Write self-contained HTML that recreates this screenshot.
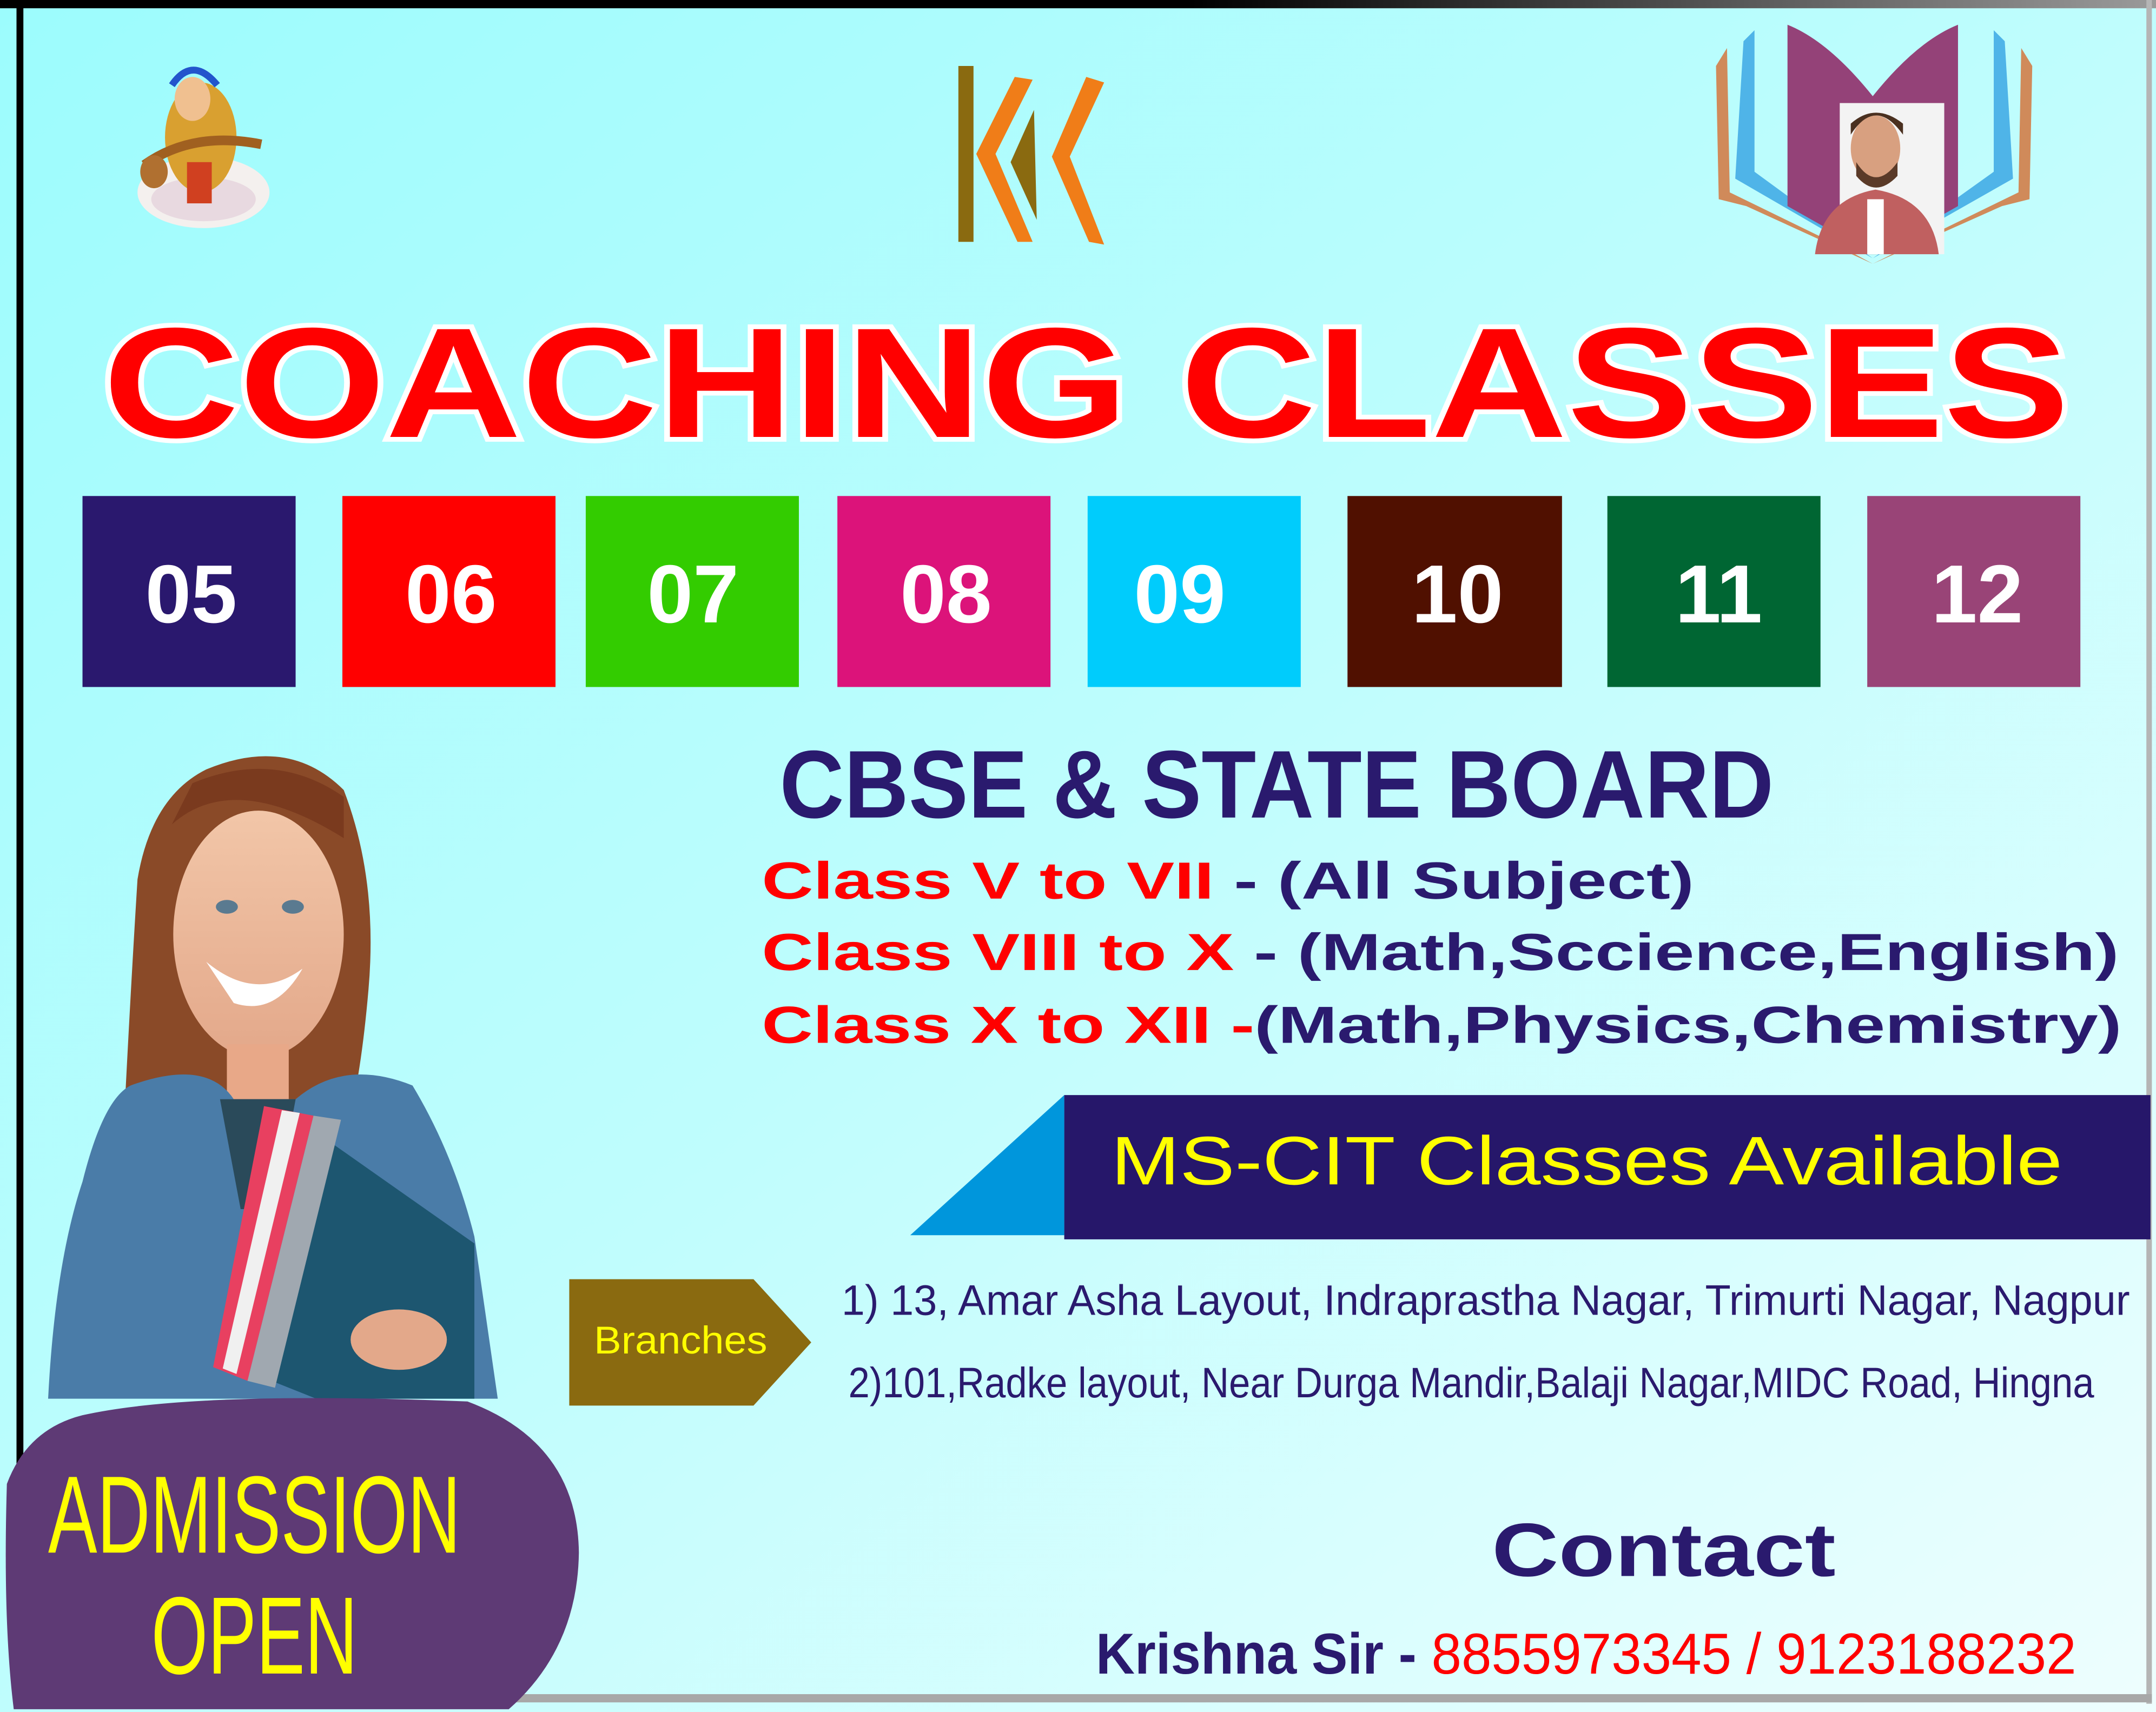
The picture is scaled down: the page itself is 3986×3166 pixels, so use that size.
<!DOCTYPE html>
<html><head><meta charset="utf-8">
<style>
html,body{margin:0;padding:0;width:3986px;height:3166px;overflow:hidden;background:#fff}
svg{display:block}
text{font-family:"Liberation Sans",Arial,sans-serif}
</style></head>
<body>
<svg width="3986" height="3166" viewBox="0 0 1568 1246" preserveAspectRatio="none" xmlns="http://www.w3.org/2000/svg">
<defs>
<linearGradient id="bg" x1="0" y1="0" x2="1" y2="1">
<stop offset="0" stop-color="#9cfcfd"/><stop offset="0.5" stop-color="#bffdfd"/><stop offset="1" stop-color="#eefefe"/>
</linearGradient>
<linearGradient id="topbar" x1="0" y1="0" x2="1" y2="0">
<stop offset="0" stop-color="#000"/><stop offset="0.55" stop-color="#000"/><stop offset="1" stop-color="#9a9a9a"/>
</linearGradient>
<linearGradient id="skin" x1="0" y1="0" x2="0" y2="1">
<stop offset="0" stop-color="#f2c6a8"/><stop offset="1" stop-color="#e3a88a"/>
</linearGradient>
</defs>
<rect width="1568" height="1246" fill="url(#bg)"/>
<rect x="0" y="0" width="1568" height="6" fill="url(#topbar)"/>
<rect x="12" y="0" width="5" height="1150" fill="#000"/>
<rect x="1561" y="0" width="4" height="1240" fill="#b5b5b5"/>
<rect x="17" y="1233" width="1548" height="6" fill="#a8a8a8"/>

<!-- Saraswati approximation -->
<g>
<ellipse cx="148" cy="140" rx="48" ry="26" fill="#f4f0ee"/>
<ellipse cx="148" cy="145" rx="38" ry="16" fill="#e8d9e0"/>
<ellipse cx="146" cy="100" rx="26" ry="40" fill="#d9a030"/>
<ellipse cx="140" cy="72" rx="13" ry="16" fill="#f0c090"/>
<path d="M125 62 Q140 40 158 62" stroke="#2255cc" stroke-width="5" fill="none"/>
<path d="M105 120 Q140 95 190 105" stroke="#a06020" stroke-width="7" fill="none"/>
<ellipse cx="112" cy="125" rx="10" ry="12" fill="#b07030"/>
<rect x="136" y="118" width="18" height="30" fill="#d04020"/>
</g>

<!-- KK logo -->
<g>
<polygon points="697,48 708,48 708,176 697,176" fill="#8a6a10"/>
<polygon points="738,56 751,58 724,112 751,176 740,176 710,112" fill="#f07d18"/>
<polygon points="752,80 754,160 735,118" fill="#8a6a10"/>
<polygon points="790,56 803,60 778,114 803,178 792,176 765,114" fill="#f07d18"/>
</g>

<!-- Book logo -->
<g>
<path d="M1248 48 L1256 35 L1258 140 L1340 180 L1362 192 L1270 150 L1250 145 Z" fill="#d08a5a"/>
<path d="M1478 48 L1470 35 L1468 140 L1386 180 L1362 192 L1456 150 L1476 145 Z" fill="#d08a5a"/>
<path d="M1268 30 L1276 22 L1276 125 L1362 188 L1262 130 Z" fill="#4fb4e8"/>
<path d="M1458 30 L1450 22 L1450 125 L1362 188 L1464 130 Z" fill="#4fb4e8"/>
<path d="M1300 18 Q1330 30 1362 70 Q1394 30 1424 18 L1424 150 L1362 185 L1300 150 Z" fill="#944278"/>
<rect x="1338" y="75" width="76" height="110" fill="#f3f3f3"/>
<ellipse cx="1364" cy="108" rx="18" ry="24" fill="#d8a080"/>
<path d="M1346 98 Q1364 70 1384 98 L1384 90 Q1364 74 1346 90Z" fill="#4a3020"/>
<path d="M1350 118 Q1364 140 1380 118 L1380 128 Q1364 145 1350 128Z" fill="#5a3a28"/>
<path d="M1320 185 Q1325 145 1364 138 Q1405 145 1410 185 Z" fill="#c06060"/>
<rect x="1358" y="145" width="12" height="40" fill="#fff"/>
</g>

<!-- COACHING CLASSES -->
<text x="75" y="318" font-size="114" font-weight="bold" fill="#ff0000" stroke="#fff" stroke-width="7" paint-order="stroke" textLength="1430" lengthAdjust="spacingAndGlyphs">COACHING CLASSES</text>

<!-- number boxes -->
<g font-size="60" font-weight="bold" fill="#fff" text-anchor="middle">
<rect x="60" y="361" width="155" height="139" fill="#2a186e"/>
<rect x="249" y="361" width="155" height="139" fill="#ff0000"/>
<rect x="426" y="361" width="155" height="139" fill="#33cc00"/>
<rect x="609" y="361" width="155" height="139" fill="#dc137a"/>
<rect x="791" y="361" width="155" height="139" fill="#00ccfc"/>
<rect x="980" y="361" width="156" height="139" fill="#501000"/>
<rect x="1169" y="361" width="155" height="139" fill="#006633"/>
<rect x="1358" y="361" width="155" height="139" fill="#994477"/>
<text x="139" y="453">05</text>
<text x="328" y="453">06</text>
<text x="504" y="453">07</text>
<text x="688" y="453">08</text>
<text x="858" y="453">09</text>
<text x="1060" y="453">10</text>
<text x="1250" y="453">11</text>
<text x="1438" y="453">12</text>
</g>

<!-- CBSE -->
<text x="567" y="595" font-size="70" font-weight="bold" fill="#2a1a6e" textLength="723" lengthAdjust="spacingAndGlyphs">CBSE &amp; STATE BOARD</text>

<g font-size="38" font-weight="bold">
<text x="554" y="654" textLength="678" lengthAdjust="spacingAndGlyphs"><tspan fill="#ff0000">Class V to VII</tspan><tspan fill="#2a1a6e"> - (All Subject)</tspan></text>
<text x="554" y="706" textLength="987" lengthAdjust="spacingAndGlyphs"><tspan fill="#ff0000">Class VIII to X</tspan><tspan fill="#2a1a6e"> - (Math,Sccience,English)</tspan></text>
<text x="554" y="759" textLength="989" lengthAdjust="spacingAndGlyphs"><tspan fill="#ff0000">Class X to XII -</tspan><tspan fill="#2a1a6e">(Math,Physics,Chemistry)</tspan></text>
</g>

<!-- MS-CIT banner -->
<rect x="774" y="797" width="790" height="105" fill="#26176a"/>
<polygon points="662,899 774,797 774,899" fill="#0096dc"/>
<text x="808" y="862" font-size="50" fill="#ffff00" textLength="692" lengthAdjust="spacingAndGlyphs">MS-CIT Classes Available</text>

<!-- Branches -->
<polygon points="414,931 548,931 590,977 548,1023 414,1023" fill="#8a6a10"/>
<text x="432" y="985" font-size="28" fill="#ffff00" textLength="126" lengthAdjust="spacingAndGlyphs">Branches</text>
<text x="612" y="957" font-size="31" fill="#2a1a6e" textLength="937" lengthAdjust="spacingAndGlyphs">1) 13, Amar Asha Layout, Indraprastha Nagar, Trimurti Nagar, Nagpur</text>
<text x="617" y="1017" font-size="31" fill="#2a1a6e" textLength="906" lengthAdjust="spacingAndGlyphs">2)101,Radke layout, Near Durga Mandir,Balaji Nagar,MIDC Road, Hingna</text>

<!-- Girl approximation -->
<g>
<path d="M150 560 Q210 535 250 575 Q275 640 268 720 Q262 790 250 830 L90 820 Q95 720 100 640 Q110 580 150 560Z" fill="#8a4a28"/>
<ellipse cx="188" cy="680" rx="62" ry="90" fill="url(#skin)"/>
<path d="M150 700 Q186 730 220 705 Q200 740 170 730Z" fill="#fff"/>
<ellipse cx="165" cy="660" rx="8" ry="5" fill="#5a7a90"/>
<ellipse cx="213" cy="660" rx="8" ry="5" fill="#5a7a90"/>
<path d="M125 600 Q170 560 250 610 L250 580 Q200 545 140 570Z" fill="#7a3a1e"/>
<rect x="165" y="760" width="45" height="40" fill="#e8a888"/>
<path d="M95 790 Q150 770 170 800 L215 800 Q250 770 300 790 Q330 840 345 900 L362 1018 L35 1018 Q40 920 60 860 Q75 800 95 790Z" fill="#4a7ca8"/>
<path d="M160 800 L215 800 L200 880 L175 880Z" fill="#2a4a5a"/>
<polygon points="210,810 345,905 345,1018 230,1018 185,1000" fill="#1d5670"/>
<polygon points="192,805 228,812 180,1005 155,995" fill="#e84060"/>
<polygon points="205,808 218,810 172,1000 162,996" fill="#f0f0f0"/>
<polygon points="228,812 248,815 200,1010 180,1005" fill="#a0a8b0"/>
<ellipse cx="290" cy="975" rx="35" ry="22" fill="#e3a88a"/>
</g>

<!-- Admission blob -->
<path d="M60 1030 Q140 1012 340 1020 Q420 1050 421 1130 Q420 1200 370 1244 L10 1244 Q2 1180 5 1080 Q20 1040 60 1030Z" fill="#5e3a75"/>
<text x="35" y="1130" font-size="80" fill="#ffff00" textLength="300" lengthAdjust="spacingAndGlyphs">ADMISSION</text>
<text x="110" y="1218" font-size="80" fill="#ffff00" textLength="150" lengthAdjust="spacingAndGlyphs">OPEN</text>

<!-- Contact -->
<text x="1085" y="1147" font-size="55" font-weight="bold" fill="#2a1a6e" textLength="250" lengthAdjust="spacingAndGlyphs">Contact</text>
<text x="797" y="1218" font-size="42" textLength="713" lengthAdjust="spacingAndGlyphs"><tspan fill="#2a1a6e" font-weight="bold">Krishna Sir - </tspan><tspan fill="#ff0000">8855973345 / 9123188232</tspan></text>
</svg>
</body></html>
